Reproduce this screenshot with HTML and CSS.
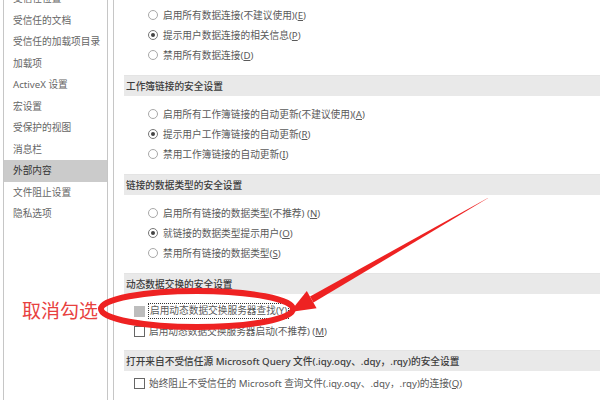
FILE: index.html
```html
<!DOCTYPE html>
<html lang="zh-CN">
<head>
  <meta charset="UTF-8">
  <meta name="viewport" content="width=device-width, initial-scale=1.0">
  <title>信任中心 - 外部内容</title>
  <link rel="stylesheet" href="styles.css">
</head>
<body>

<div class="window">
  <!-- Left navigation -->
  <nav class="sidebar">
    <div class="nav-item">受信任位置</div>
    <div class="nav-item">受信任的文档</div>
    <div class="nav-item">受信任的加载项目录</div>
    <div class="nav-item">加载项</div>
    <div class="nav-item">ActiveX 设置</div>
    <div class="nav-item">宏设置</div>
    <div class="nav-item">受保护的视图</div>
    <div class="nav-item">消息栏</div>
    <div class="nav-item active">外部内容</div>
    <div class="nav-item">文件阻止设置</div>
    <div class="nav-item">隐私选项</div>
  </nav>

  <main class="content">
    <div class="group first">
      <div class="option"><span class="radio"></span>启用所有数据连接(不建议使用)(<u>E</u>)</div>
      <div class="option"><span class="radio checked"></span>提示用户数据连接的相关信息(<u>P</u>)</div>
      <div class="option"><span class="radio"></span>禁用所有数据连接(<u>D</u>)</div>
    </div>

    <div class="section-title">工作簿链接的安全设置</div>
    <div class="group">
      <div class="option"><span class="radio"></span>启用所有工作簿链接的自动更新(不建议使用)(<u>A</u>)</div>
      <div class="option"><span class="radio checked"></span>提示用户工作簿链接的自动更新(<u>R</u>)</div>
      <div class="option"><span class="radio"></span>禁用工作簿链接的自动更新(<u>I</u>)</div>
    </div>

    <div class="section-title">链接的数据类型的安全设置</div>
    <div class="group">
      <div class="option"><span class="radio"></span>启用所有链接的数据类型(不推荐) (<u>N</u>)</div>
      <div class="option"><span class="radio checked"></span>就链接的数据类型提示用户(<u>O</u>)</div>
      <div class="option"><span class="radio"></span>禁用所有链接的数据类型(<u>S</u>)</div>
    </div>

    <div class="section-title">动态数据交换的安全设置</div>
    <div class="group checks">
      <div class="option"><span class="checkbox disabled"></span><span class="focus">启用动态数据交换服务器查找(<u>Y</u>)</span></div>
      <div class="option"><span class="checkbox"></span>启用动态数据交换服务器启动(不推荐) (<u>M</u>)</div>
    </div>

    <div class="section-title">打开来自不受信任源 Microsoft Query 文件(.iqy.oqy、.dqy，.rqy)的安全设置</div>
    <div class="group checks tight">
      <div class="option"><span class="checkbox"></span>始终阻止不受信任的 Microsoft 查询文件(.iqy.oqy、.dqy，.rqy)的连接(<u>Q</u>)</div>
    </div>
  </main>
</div>

<!-- Red hand-drawn annotation on top of the dialog -->
<div class="note">取消勾选</div>
<svg class="marks" width="600" height="400" viewBox="0 0 600 400">
  <ellipse cx="197" cy="309" rx="96" ry="18" fill="none" stroke="#ee2222" stroke-width="6"/>
  <polygon points="313.4,302.6 488.2,198.1 487.8,197.9 310,296.6" fill="#ee2222"/>
  <polygon points="290,312 316.6,308.3 306.8,290.9" fill="#ee2222"/>
</svg>

</body>
</html>
```

FILE: styles.css
```css
body {
  margin: 0;
  background: #fff;
  font-family: "Noto Sans", "Noto Sans CJK SC", sans-serif;
  font-size: 9.7px;
  color: #5a5a5a;
  position: relative;
}

.window {
  display: flex;
  height: 400px;
  overflow: hidden;
}

/* Left navigation */
.sidebar {
  width: 103px;
  margin-left: 3px;
  border-left: 1px solid #c6c6c6;
  border-right: 1px solid #c6c6c6;
}

.nav-item {
  line-height: 21.5px;
  padding-left: 9px;
  color: #666;
  white-space: nowrap;
}

.nav-item:first-child {
  margin-top: -12px;
}

.nav-item.active {
  background: #cbcbcb;
  color: #333;
}

/* Right panel */
.content {
  flex: 1;
  margin-left: 5px;
  border-left: 1px solid #c6c6c6;
  padding-left: 10px;
}

.section-title {
  height: 21px;
  line-height: 21px;
  padding-left: 2px;
  background: #e9e9e9;
  border-top: 1px solid #e4e4e4;
  box-sizing: border-box;
  color: #3c3c3c;
  font-weight: 500;
  white-space: nowrap;
}

.group {
  padding: 8px 0 10px 24px;
}

.group.first {
  padding-top: 5px;
}

.group.checks {
  padding: 7px 0 9px 10px;
}

.group.tight {
  padding-top: 2px;
}

.option {
  display: flex;
  align-items: center;
  height: 20px;
  white-space: nowrap;
}

.radio {
  width: 8px;
  height: 8px;
  border: 1px solid #a8a8a8;
  border-radius: 50%;
  margin-right: 5px;
  position: relative;
}

.radio.checked {
  border-color: #777;
}

.radio.checked::after {
  content: "";
  position: absolute;
  left: 2px;
  top: 2px;
  width: 4px;
  height: 4px;
  border-radius: 50%;
  background: #444;
}

.checkbox {
  width: 9px;
  height: 9px;
  border: 1px solid #666;
  margin-right: 4px;
  background: #fff;
}

.checkbox.disabled {
  background: #bdbdbd;
  border-color: #bdbdbd;
}

.focus {
  border: 1px dotted #333;
  padding: 0 1px;
  line-height: 14px;
  margin-left: -1px;
}

/* Annotation */
.note {
  position: absolute;
  left: 22px;
  top: 297px;
  font-family: "Noto Sans CJK SC", sans-serif;
  font-size: 19px;
  line-height: 26px;
  color: #e8413f;
}

.marks {
  position: absolute;
  left: 0;
  top: 0;
  pointer-events: none;
}
```
